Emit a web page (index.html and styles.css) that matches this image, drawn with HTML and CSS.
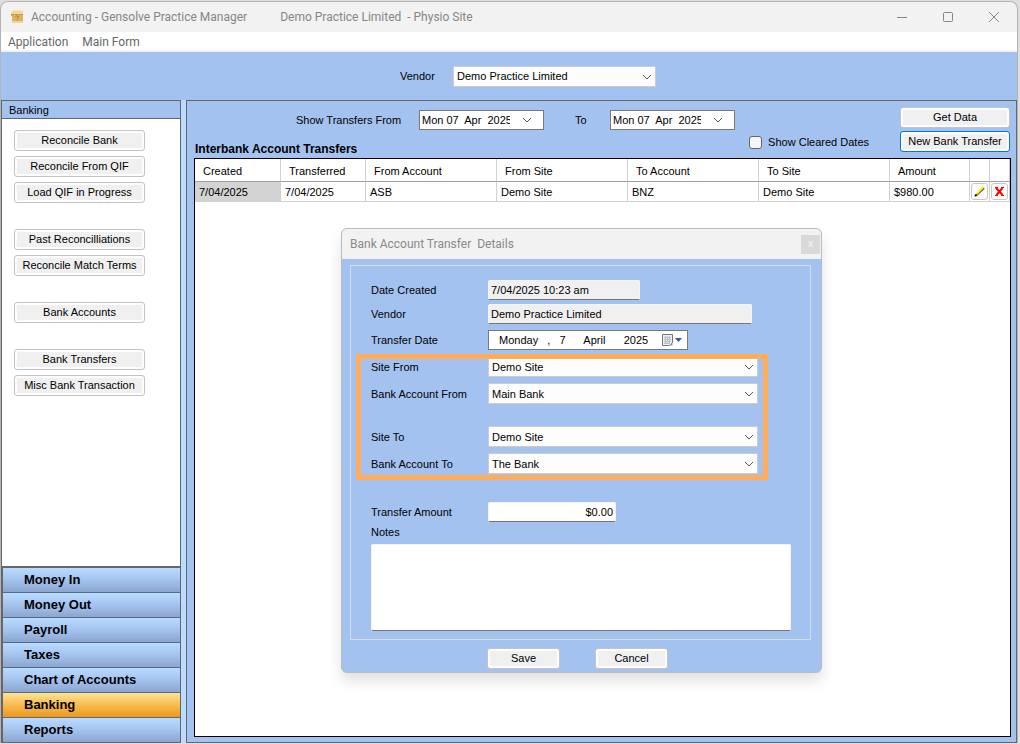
FILE: index.html
```
<!DOCTYPE html>
<html lang="en">
<head>
    <meta charset="UTF-8">
    <meta name="viewport" content="width=device-width, initial-scale=1.0">
    <title>Accounting - Gensolve Practice Manager</title>
    <link rel="stylesheet" href="styles.css">
</head>
<body>

    <div class="window">
        <!-- title bar -->
        <header class="titlebar">
            <svg class="app-icon" width="14" height="14" viewBox="0 0 14 14">
                <path d="M1 3L3 0.500H13V4H1Z" fill="#f0d9a0"/>
                <path d="M1 4H13V6H1Z" fill="#c99a4a"/>
                <rect x="2" y="5" width="11" height="8" fill="#e0b25c"/>
                <rect x="2" y="11" width="11" height="2" fill="#ecd5a4"/>
                <path d="M5.500 6.500Q7 5 8.500 6.500Q8.500 7.500 7 8.500M7 9.500V10.500" stroke="#a67f3c"/>
            </svg>
            <span class="app-title">Accounting - Gensolve Practice Manager</span>
            <span class="app-site">Demo Practice Limited&nbsp; - Physio Site</span>
            <div class="window-controls">
                <button type="button" aria-label="Minimise"><svg width="12" height="12" viewBox="0 0 12 12"><path d="M1 6.500H11"/></svg></button>
                <button type="button" aria-label="Maximise"><svg width="12" height="12" viewBox="0 0 12 12"><rect x="1.500" y="1.500" width="9" height="9" rx="1"/></svg></button>
                <button type="button" aria-label="Close"><svg width="12" height="12" viewBox="0 0 12 12"><path d="M1 1L11 11M11 1L1 11"/></svg></button>
            </div>
        </header>

        <nav class="menubar">
            <a href="#">Application</a>
            <a href="#">Main Form</a>
        </nav>

        <div class="vendor-bar">
            <label for="vendor">Vendor</label>
            <div class="select vendor-select">
                <select id="vendor"><option>Demo Practice Limited</option></select>
                <svg width="10" height="6" viewBox="0 0 10 6"><path d="M1 1L5 5L9 1"/></svg>
            </div>
        </div>

        <div class="workspace">
            <!-- sidebar -->
            <aside class="sidebar">
                <h2>Banking</h2>
                <div class="actions">
                    <div class="action-group">
                        <button type="button" class="btn">Reconcile Bank</button>
                        <button type="button" class="btn">Reconcile From QIF</button>
                        <button type="button" class="btn">Load QIF in Progress</button>
                    </div>
                    <div class="action-group">
                        <button type="button" class="btn">Past Reconcilliations</button>
                        <button type="button" class="btn">Reconcile Match Terms</button>
                    </div>
                    <div class="action-group">
                        <button type="button" class="btn">Bank Accounts</button>
                    </div>
                    <div class="action-group">
                        <button type="button" class="btn">Bank Transfers</button>
                        <button type="button" class="btn">Misc Bank Transaction</button>
                    </div>
                </div>
                <nav class="modules">
                    <a href="#">Money In</a>
                    <a href="#">Money Out</a>
                    <a href="#">Payroll</a>
                    <a href="#">Taxes</a>
                    <a href="#">Chart of Accounts</a>
                    <a href="#" class="active">Banking</a>
                    <a href="#">Reports</a>
                </nav>
            </aside>

            <!-- transfers -->
            <main class="panel">
                <div class="toolbar">
                    <div class="toolbar-main">
                        <div class="filters">
                            <label class="from-label" for="date-from">Show Transfers From</label>
                            <div class="date">
                                <input type="text" id="date-from" value="Mon 07  Apr  2025">
                                <button type="button" aria-label="Open calendar"><svg width="10" height="6" viewBox="0 0 10 6"><path d="M1 1L5 5L9 1"/></svg></button>
                            </div>
                            <label class="to-label" for="date-to">To</label>
                            <div class="date">
                                <input type="text" id="date-to" value="Mon 07  Apr  2025">
                                <button type="button" aria-label="Open calendar"><svg width="10" height="6" viewBox="0 0 10 6"><path d="M1 1L5 5L9 1"/></svg></button>
                            </div>
                        </div>
                        <div class="heading-row">
                            <h1>Interbank Account Transfers</h1>
                            <label class="check"><input type="checkbox"> Show Cleared Dates</label>
                        </div>
                    </div>
                    <div class="toolbar-buttons">
                        <button type="button" class="btn">Get Data</button>
                        <button type="button" class="btn focused">New Bank Transfer</button>
                    </div>
                </div>

                <div class="grid">
                    <table>
                        <colgroup>
                            <col class="col-created"><col class="col-date">
                            <col class="col-name"><col class="col-name"><col class="col-name"><col class="col-name">
                            <col class="col-amount"><col class="col-icon"><col class="col-icon">
                        </colgroup>
                        <thead>
                            <tr>
                                <th>Created</th>
                                <th>Transferred</th>
                                <th>From Account</th>
                                <th>From Site</th>
                                <th>To Account</th>
                                <th>To Site</th>
                                <th>Amount</th>
                                <th></th>
                                <th></th>
                            </tr>
                        </thead>
                        <tbody>
                            <tr>
                                <td class="selected">7/04/2025</td>
                                <td>7/04/2025</td>
                                <td>ASB</td>
                                <td>Demo Site</td>
                                <td>BNZ</td>
                                <td>Demo Site</td>
                                <td>$980.00</td>
                                <td class="icon-cell">
                                    <button type="button" aria-label="Edit">
                                        <svg width="11" height="11" viewBox="0 0 11 11">
                                            <path d="M2 9.500L10 2" stroke="#444" stroke-width="2"/>
                                            <path d="M2.500 8L9.500 1" stroke="#ffee00" stroke-width="2"/>
                                            <path d="M0.500 10.500L1 8L3 10Z" fill="#000"/>
                                        </svg>
                                    </button>
                                </td>
                                <td class="icon-cell">
                                    <button type="button" aria-label="Delete">
                                        <svg width="11" height="11" viewBox="0 0 11 11">
                                            <path d="M2 2L8.500 9M8.500 2L2.500 9" stroke="#f00" stroke-width="2"/>
                                            <path d="M1 1.500H4M7 1.500H10M1 9.500H4M7 9.500H10" stroke="#f00"/>
                                        </svg>
                                    </button>
                                </td>
                            </tr>
                        </tbody>
                    </table>

                    <!-- transfer details dialog -->
                    <form class="dialog">
                        <div class="dialog-title">
                            <span>Bank Account Transfer&nbsp; Details</span>
                            <button type="button" aria-label="Close">x</button>
                        </div>
                        <div class="dialog-body">
                            <div class="fields">
                                <div class="row">
                                    <label for="created">Date Created</label>
                                    <input type="text" class="text short" id="created" value="7/04/2025 10:23 am" readonly>
                                </div>
                                <div class="row">
                                    <label for="d-vendor">Vendor</label>
                                    <input type="text" class="text" id="d-vendor" value="Demo Practice Limited" readonly>
                                </div>
                                <div class="row date-row">
                                    <label for="t-date">Transfer Date</label>
                                    <div class="date long-date">
                                        <input type="text" id="t-date" value="Monday   ,   7      April      2025">
                                        <button type="button" aria-label="Open calendar">
                                            <svg width="22" height="14" viewBox="0 0 22 14">
                                                <path d="M1.500 1.500H11.500V9.500L8.500 12.500H1.500Z" fill="#eef1f6" stroke="#777"/>
                                                <path d="M3 4.500H10M3 6.500H10M3 8.500H10M3 10.500H8M4.500 3V11M6.500 3V11M8.500 3V11" stroke="#b9c0ce"/>
                                                <path d="M8.500 12.500L11.500 9.500V12.500Z" fill="#999"/>
                                                <path d="M14 5H21L17.500 9Z" fill="#3b5a8c"/>
                                            </svg>
                                        </button>
                                    </div>
                                </div>

                                <div class="highlight">
                                    <div class="row">
                                        <label for="site-from">Site From</label>
                                        <div class="select">
                                            <select id="site-from"><option>Demo Site</option></select>
                                            <svg width="10" height="6" viewBox="0 0 10 6"><path d="M1 1L5 5L9 1"/></svg>
                                        </div>
                                    </div>
                                    <div class="row">
                                        <label for="bank-from">Bank Account From</label>
                                        <div class="select">
                                            <select id="bank-from"><option>Main Bank</option></select>
                                            <svg width="10" height="6" viewBox="0 0 10 6"><path d="M1 1L5 5L9 1"/></svg>
                                        </div>
                                    </div>
                                    <div class="row to-row">
                                        <label for="site-to">Site To</label>
                                        <div class="select">
                                            <select id="site-to"><option>Demo Site</option></select>
                                            <svg width="10" height="6" viewBox="0 0 10 6"><path d="M1 1L5 5L9 1"/></svg>
                                        </div>
                                    </div>
                                    <div class="row">
                                        <label for="bank-to">Bank Account To</label>
                                        <div class="select">
                                            <select id="bank-to"><option>The Bank</option></select>
                                            <svg width="10" height="6" viewBox="0 0 10 6"><path d="M1 1L5 5L9 1"/></svg>
                                        </div>
                                    </div>
                                </div>

                                <div class="row amount-row">
                                    <label for="amount">Transfer Amount</label>
                                    <input type="text" class="text amount" id="amount" value="$0.00">
                                </div>
                                <label class="notes-label" for="notes">Notes</label>
                                <textarea id="notes"></textarea>
                            </div>
                            <div class="dialog-buttons">
                                <button type="button" class="btn">Save</button>
                                <button type="button" class="btn">Cancel</button>
                            </div>
                        </div>
                    </form>
                </div>
            </main>
        </div>
    </div>

</body>
</html>
```
FILE: styles.css
```
* {
    box-sizing: border-box;
}

body {
    margin: 0;
    background: #dedede;
    color: #000;
    font-family: "Liberation Sans", Arial, sans-serif;
    font-size: 11px;
    line-height: 16px;
}

button, input, select, textarea {
    font: inherit;
    color: inherit;
    margin: 0;
}

h1, h2 {
    margin: 0;
    font-size: inherit;
}

svg {
    display: block;
    fill: none;
}

.window {
    display: flex;
    flex-direction: column;
    min-height: calc(100vh - 2px);
    margin: 1px 2px 1px 0;
    border: 1px solid #b4b4b4;
    border-bottom: 0;
    border-radius: 8px 8px 0 0;
    background: #a4c2ef;
    overflow: hidden;
}

/* title bar and menu */
.titlebar {
    display: flex;
    align-items: center;
    height: 30px;
    padding-left: 9px;
    background: #f2f2f2;
    color: #868686;
    font-family: Roboto, sans-serif;
    font-size: 12px;
}

.app-title {
    margin-left: 7px;
}

.app-site {
    margin-left: 33px;
}

.window-controls {
    display: flex;
    margin-left: auto;
}

.window-controls button {
    display: flex;
    justify-content: center;
    align-items: center;
    width: 46px;
    height: 30px;
    padding: 0;
    border: 0;
    background: none;
}

.window-controls svg {
    stroke: #868686;
}

.menubar {
    display: flex;
    gap: 14px;
    height: 20px;
    padding-left: 7px;
    border-bottom: 2px solid #f2f2f2;
    background: #fff;
    font-family: Roboto, sans-serif;
    font-size: 12px;
    line-height: 20px;
}

.menubar a {
    color: #666;
    text-decoration: none;
}

.vendor-bar {
    display: flex;
    align-items: center;
    height: 48px;
    padding-left: 399px;
}

.vendor-bar label {
    width: 53px;
}

/* shared controls */
.btn {
    height: 21px;
    padding: 0;
    border: 1px solid #c4c4c4;
    border-radius: 3px;
    background: #f0f0f0;
    box-shadow: inset 0 0 0 2px #fdfdfd;
    line-height: 19px;
    text-align: center;
}

.btn.focused {
    border-color: #0078d7;
}

.select {
    position: relative;
    width: 270px;
}

.vendor-select {
    width: 203px;
}

.select select {
    appearance: none;
    display: block;
    width: 100%;
    height: 21px;
    padding: 0 20px 0 3px;
    border: 1px solid #ccc;
    border-radius: 0;
    background: #fdfdfd;
}

.select svg {
    position: absolute;
    top: 8px;
    right: 4px;
    pointer-events: none;
}

.select svg,
.date svg {
    stroke: #555;
}

.date {
    display: flex;
    width: 125px;
    height: 20px;
    border: 1px solid #7a7a7a;
    background: #fff;
}

.date input {
    width: 90px;
    padding: 0 0 0 2px;
    border: 0;
    background: none;
}

.date button {
    display: flex;
    justify-content: center;
    align-items: center;
    width: 33px;
    padding: 0;
    border: 0;
    background: none;
}

/* sidebar */
.workspace {
    display: flex;
    flex: 1;
    background: #b9dcff;
}

.sidebar {
    display: flex;
    flex-direction: column;
    width: 180px;
    margin-right: 5px;
    border: 1px solid #666;
    background: #fff;
}

.sidebar h2 {
    height: 18px;
    padding-left: 7px;
    border-bottom: 1px solid #666;
    background: #a4c2ef;
    font-weight: normal;
    line-height: 18px;
}

.actions {
    display: flex;
    flex: 1;
    flex-direction: column;
    gap: 26px;
    padding: 11px 35px 11px 12px;
}

.action-group {
    display: flex;
    flex-direction: column;
    gap: 5px;
}

.modules {
    display: flex;
    flex-direction: column;
    border-top: 2px solid #666;
    border-left: 1px solid #666;
}

.modules a {
    height: 25px;
    padding-left: 21px;
    border-bottom: 1px solid #566a88;
    background: linear-gradient(#b9dcff, #a4c2ef 50%, #8ba6cf);
    color: #000;
    font-size: 13px;
    font-weight: bold;
    line-height: 24px;
    text-decoration: none;
}

.modules a:last-child {
    height: 24px;
    border-bottom: 0;
}

.modules a.active {
    background: linear-gradient(#ffe391, #f6bb51 50%, #ef9818);
}

/* main panel */
.panel {
    display: flex;
    flex: 1;
    flex-direction: column;
    min-width: 0;
    padding: 6px 5px 5px 7px;
    border: 1px solid #666;
    background: #a4c2ef;
}

.toolbar {
    display: flex;
    height: 51px;
}

.toolbar-main {
    flex: 1;
    padding-top: 3px;
}

.filters {
    display: flex;
    align-items: center;
    padding-left: 102px;
}

.from-label {
    width: 123px;
}

.to-label {
    width: 66px;
    padding-left: 31px;
}

.heading-row {
    display: flex;
    justify-content: space-between;
    height: 27px;
}

.heading-row h1 {
    align-self: flex-end;
    padding-left: 1px;
    font-size: 12px;
}

.check {
    display: flex;
    align-items: center;
    gap: 6px;
    height: 24px;
    margin-right: 31px;
}

.check input {
    appearance: none;
    width: 13px;
    height: 13px;
    border: 1px solid #666;
    border-radius: 3px;
    background: #f6f6f6;
}

.toolbar-buttons {
    display: flex;
    flex-direction: column;
    gap: 3px;
    width: 110px;
    margin-right: 1px;
}

.grid {
    position: relative;
    flex: 1;
    border: 1px solid #000;
    background: #fff;
}

table {
    border-collapse: separate;
    border-spacing: 0;
    table-layout: fixed;
    width: 815px;
}

.col-created {
    width: 86px;
}

.col-date {
    width: 85px;
}

.col-name {
    width: 131px;
}

.col-amount {
    width: 80px;
}

.col-icon {
    width: 20px;
}

th, td {
    padding: 0 4px;
    border-right: 1px solid #d0d0d0;
    text-align: left;
    white-space: nowrap;
}

th {
    height: 23px;
    padding: 2px 0 0 8px;
    border-bottom: 1px solid #a0a0a0;
    font-weight: normal;
}

td {
    height: 20px;
    border-bottom: 1px solid #d0d0d0;
}

td:first-child {
    background: #d3d3d3;
}

td.icon-cell {
    padding: 0 1px;
}

.icon-cell button {
    display: flex;
    justify-content: center;
    align-items: center;
    width: 17px;
    height: 17px;
    padding: 0;
    border: 1px solid #c8c8c8;
    border-radius: 3px;
    background: #fdfdfd;
}

/* dialog */
.dialog {
    position: absolute;
    top: 69px;
    left: 146px;
    width: 481px;
    border: 1px solid #bbb;
    border-radius: 6px;
    background: #a4c2ef;
    box-shadow: 0 8px 14px rgba(0, 0, 0, 0.12);
}

.dialog-title {
    display: flex;
    justify-content: space-between;
    align-items: center;
    height: 30px;
    padding: 0 1px 0 8px;
    border-radius: 5px 5px 0 0;
    background: #f2f2f2;
    color: #8a8a8a;
    font-family: Roboto, sans-serif;
    font-size: 12px;
}

.dialog-title button {
    width: 19px;
    height: 19px;
    padding: 0;
    border: 0;
    background: #d9d9d9;
    color: #ededed;
    font-size: 11px;
    font-weight: bold;
    line-height: 16px;
}

.dialog-body {
    padding: 6px 10px 3px 8px;
}

.fields {
    padding: 14px 19px 8px 20px;
    border: 1px solid #d5dbe3;
}

.row {
    display: flex;
    align-items: center;
    margin-bottom: 4px;
}

.row label {
    width: 117px;
}

.date-row {
    margin: 6px 0;
}

.amount-row {
    margin-bottom: 2px;
}

.text {
    width: 264px;
    height: 20px;
    padding: 0 2px;
    border: 1px solid #f4f4f4;
    border-bottom-color: #777;
    border-radius: 2px;
    background: #fff;
}

.text[readonly] {
    background: #f0f0f0;
}

.text.short {
    width: 152px;
}

.text.amount {
    width: 128px;
    text-align: right;
}

.long-date {
    width: 200px;
}

.long-date input {
    width: 168px;
    padding-left: 10px;
}

.long-date button {
    width: 30px;
}

.long-date svg {
    stroke: none;
}

/* orange frame over the account fields */
.highlight {
    position: relative;
    margin-bottom: 28px;
}

.highlight::after {
    content: "";
    position: absolute;
    inset: -2px 23px -6px -15px;
    border: 5px solid #ffad5b;
    pointer-events: none;
}

.highlight .row {
    margin-bottom: 6px;
}

.highlight .to-row {
    margin-top: 22px;
}

.highlight .row:last-child {
    margin-bottom: 0;
}

.notes-label {
    display: block;
    margin-bottom: 4px;
}

textarea {
    display: block;
    width: 100%;
    height: 87px;
    border: 1px solid #f4f4f4;
    border-bottom-color: #777;
    border-radius: 2px;
    background: #fff;
    resize: none;
}

.dialog-buttons {
    display: flex;
    justify-content: center;
    gap: 35px;
    padding: 8px 6px 0 0;
}

.dialog-buttons .btn {
    width: 73px;
}
```
